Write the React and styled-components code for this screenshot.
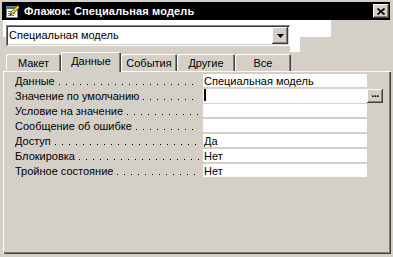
import React from "react";
import styled, { createGlobalStyle } from "styled-components";

const GlobalStyle = createGlobalStyle`
  html, body { margin: 0; padding: 0; background: #d4d0c8; }
  body {
    font-family: "Liberation Sans", Arial, sans-serif;
    font-size: 11px;
    color: #000;
  }
  * { box-sizing: border-box; }
`;

const raised = `
  box-shadow: inset -1px -1px #404040, inset 1px 1px #ffffff,
    inset -2px -2px #808080, inset 2px 2px #d4d0c8;
`;

const Window = styled.div`
  width: 393px;
  height: 257px;
  background: #d4d0c8;
  padding: 2px 2px 0 2px;
  display: flex;
  flex-direction: column;
  overflow: hidden;
`;

const TitleBar = styled.div`
  width: 388px;
  height: 18px;
  flex: none;
  background: #000;
  display: flex;
  align-items: center;
  gap: 3px;
  padding: 0 1px 0 3px;
`;

const TitleText = styled.span`
  color: #fff;
  font-weight: bold;
  font-size: 11px;
  letter-spacing: 0.15px;
  white-space: nowrap;
`;

const CloseButton = styled.div`
  margin-left: auto;
  width: 16px;
  height: 14px;
  background: #d4d0c8;
  ${raised}
  display: flex;
  align-items: center;
  justify-content: center;
  padding-right: 1px;
`;

const Header = styled.div`
  height: 32px;
  flex: none;
  padding: 5px 0 0 4px;
  background:
    linear-gradient(#fff, #fff) 1px 0 / 328px 17px no-repeat,
    linear-gradient(#fff, #fff) 288px 17px / 10px 15px no-repeat,
    #d4d0c8;
`;

const ComboBox = styled.div`
  width: 284px;
  height: 21px;
  background: #fff;
  padding: 2px;
  display: flex;
  box-shadow: inset 1px 1px #808080, inset -1px -1px #ffffff,
    inset 2px 2px #404040, inset -2px -2px #d4d0c8;
`;

const ComboText = styled.span`
  flex: 1;
  padding-left: 1px;
  line-height: 17px;
  white-space: nowrap;
`;

const DropButton = styled.div`
  width: 16px;
  height: 17px;
  background: #d4d0c8;
  ${raised}
  display: flex;
  align-items: center;
  justify-content: center;
`;

const TabRow = styled.div`
  height: 19px;
  flex: none;
  display: flex;
  align-items: flex-end;
  padding-left: 4px;
`;

const Tab = styled.div`
  position: relative;
  z-index: ${(p) => (p.$active ? 2 : 1)};
  width: ${(p) => p.$w}px;
  height: ${(p) => (p.$active ? 20 : 17)}px;
  margin-bottom: ${(p) => (p.$active ? -1 : 0)}px;
  padding-top: 2px;
  line-height: 15px;
  text-align: center;
  white-space: nowrap;
  background: #d4d0c8;
  border-radius: 2px 2px 0 0;
  box-shadow: inset 1px 1px #ffffff, inset -1px 0 #404040, inset -2px 0 #808080;
`;

const Panel = styled.div`
  margin-left: 1px;
  width: 388px;
  height: 183px;
  flex: none;
  padding: 3px 0 0 12px;
  background: #d4d0c8;
  box-shadow: inset 1px 1px #ffffff, inset -1px -1px #404040,
    inset -2px -2px #808080;
`;

const PropertyList = styled.div`
  display: flex;
  flex-direction: column;
  gap: 2px;
`;

const Row = styled.div`
  display: grid;
  grid-template-columns: 188px 164px 16px;
  height: 13px;
`;

const Label = styled.div`
  display: flex;
  align-items: flex-start;
  white-space: nowrap;
  line-height: 12px;
  padding-top: 1px;
  overflow: hidden;
`;

const Leader = styled.span`
  flex: 1;
  height: 1px;
  margin: 9px 4px 0 4px;
  background-image: linear-gradient(to right, #000 1px, transparent 1px);
  background-size: 7px 1px;
  background-repeat: repeat-x;
`;

const Value = styled.div`
  display: flex;
  align-items: flex-start;
  background: #fff;
  line-height: 12px;
  padding: 1px 0 0 1px;
  white-space: nowrap;
  overflow: hidden;
`;

const Caret = styled.span`
  width: 2px;
  height: 12px;
  margin-top: -1px;
  background: #000;
`;

const BuildButton = styled.div`
  width: 16px;
  height: 14px;
  background: #d4d0c8;
  ${raised}
  display: flex;
  justify-content: center;
  align-items: flex-start;
`;

const Dots = styled.span`
  font-weight: bold;
  line-height: 8px;
  letter-spacing: -0.5px;
`;

const FormIcon = () => (
  <svg width="16" height="16" viewBox="0 0 16 16">
    <rect x="1.5" y="3.5" width="11" height="11" fill="#fff" stroke="#808080" />
    <rect x="2" y="4" width="10" height="2" fill="#3a6ea5" />
    <rect x="3" y="8" width="5" height="1" fill="#808080" />
    <rect x="3" y="10" width="7" height="1" fill="#808080" />
    <rect x="3" y="12" width="6" height="1" fill="#808080" />
    <path d="M6.5 10.5 L13.5 3.5" stroke="#7a5a00" strokeWidth="3.2" />
    <path d="M6.5 10.5 L13.5 3.5" stroke="#f7d21c" strokeWidth="1.8" />
    <path d="M5 12 L6.5 10.5" stroke="#202020" strokeWidth="1.5" />
  </svg>
);

const CloseIcon = () => (
  <svg width="8" height="7" viewBox="0 0 8 7">
    <path d="M0.5 0.5 L7.5 6.5 M7.5 0.5 L0.5 6.5" stroke="#000" strokeWidth="1.7" />
  </svg>
);

const ArrowIcon = () => (
  <svg width="7" height="4" viewBox="0 0 7 4">
    <path d="M0 0 H7 L3.5 4 Z" fill="#000" />
  </svg>
);

const tabs = [
  { label: "Макет", w: 55 },
  { label: "Данные", w: 60, active: true },
  { label: "События", w: 56 },
  { label: "Другие", w: 58 },
  { label: "Все", w: 56 },
];

const props = [
  { label: "Данные", value: "Специальная модель" },
  { label: "Значение по умолчанию", value: "", caret: true },
  { label: "Условие на значение", value: "" },
  { label: "Сообщение об ошибке", value: "" },
  { label: "Доступ", value: "Да" },
  { label: "Блокировка", value: "Нет" },
  { label: "Тройное состояние", value: "Нет" },
];

export default function App() {
  return (
    <>
      <GlobalStyle />
      <Window>
        <TitleBar>
          <FormIcon />
          <TitleText>Флажок: Специальная модель</TitleText>
          <CloseButton>
            <CloseIcon />
          </CloseButton>
        </TitleBar>
        <Header>
          <ComboBox>
            <ComboText>Специальная модель</ComboText>
            <DropButton>
              <ArrowIcon />
            </DropButton>
          </ComboBox>
        </Header>
        <TabRow>
          {tabs.map((t) => (
            <Tab key={t.label} $w={t.w} $active={t.active}>
              {t.label}
            </Tab>
          ))}
        </TabRow>
        <Panel>
          <PropertyList>
            {props.map((p) => (
              <Row key={p.label}>
                <Label>
                  {p.label}
                  <Leader />
                </Label>
                <Value>
                  {p.caret ? <Caret /> : p.value}
                </Value>
                {p.caret ? (
                  <BuildButton>
                    <Dots>...</Dots>
                  </BuildButton>
                ) : (
                  <span />
                )}
              </Row>
            ))}
          </PropertyList>
        </Panel>
      </Window>
    </>
  );
}
